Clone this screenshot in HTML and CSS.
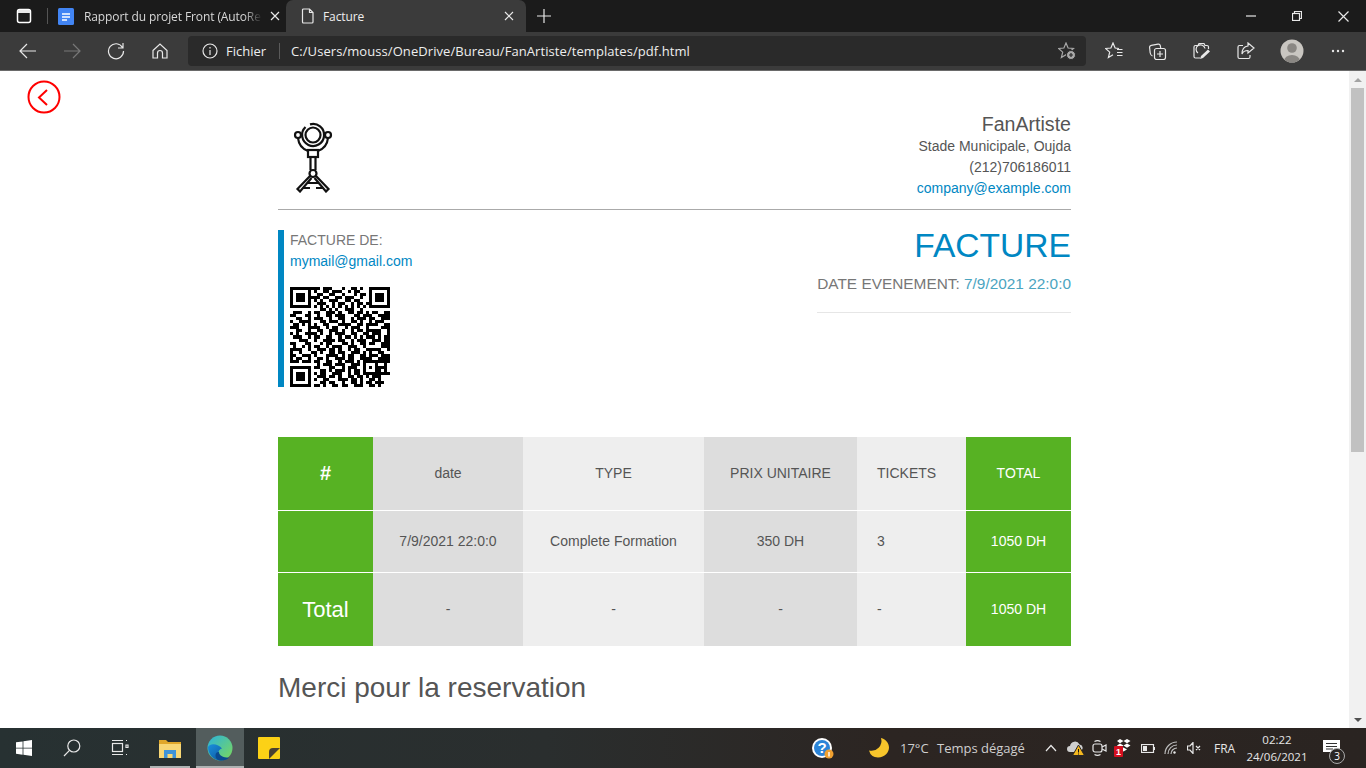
FILE: index.html
```html
<!DOCTYPE html>
<html lang="fr">
<head>
<meta charset="utf-8">
<title>Facture</title>
<link rel="stylesheet" href="styles.css">
</head>
<body>
<div class="window">
  <header class="tabbar">
    <span class="cell sidebtn"><svg class="ic bright" width="16" height="16" viewBox="0 0 16 16"><rect x="1.500" y="1.500" width="13" height="13" rx="2"/><path class="solidw" d="M2 2h12v3H2z"/></svg></span>
    <span class="tabsep"></span>
    <div class="tab">
      <svg class="favicon" width="16" height="17" viewBox="0 0 16 17"><rect width="16" height="17" rx="1.500" fill="#4285f4"/><path d="M4 6h8M4 9h8M4 12h5" stroke="#fff" stroke-width="1.500" fill="none"/></svg>
      <span class="tabtitle fade">Rapport du projet Front (AutoRe</span>
      <svg class="ic closex" width="10" height="10" viewBox="0 0 10 10"><path d="M1 1l8 8M9 1l-8 8"/></svg>
    </div>
    <div class="tab active">
      <svg class="ic" width="14" height="16" viewBox="0 0 14 16"><path d="M2.500 1h6l3.500 3.500V14a1 1 0 0 1-1 1h-8.500a1 1 0 0 1-1-1V2a1 1 0 0 1 1-1zM8.500 1v3.500H12"/></svg>
      <span class="tabtitle">Facture</span>
      <svg class="ic closex" width="10" height="10" viewBox="0 0 10 10"><path d="M1 1l8 8M9 1l-8 8"/></svg>
    </div>
    <span class="cell newtab"><svg class="ic" width="14" height="14" viewBox="0 0 14 14"><path d="M7 0v14M0 7h14"/></svg></span>
    <div class="winctl">
      <span class="wc"><svg class="ic" width="10" height="2" viewBox="0 0 10 2"><path d="M0 1h10"/></svg></span>
      <span class="wc"><svg class="ic" width="10" height="10" viewBox="0 0 10 10"><rect x=".5" y="2.500" width="7" height="7"/><path d="M2.500 2.500V.5h7v7h-2"/></svg></span>
      <span class="wc"><svg class="ic" width="11" height="11" viewBox="0 0 11 11"><path d="M.5.5l10 10M10.500.5l-10 10"/></svg></span>
    </div>
  </header>

  <nav class="toolbar">
    <span class="tb"><svg class="ic" width="18" height="16" viewBox="0 0 18 16"><path d="M1 8h16M8 1L1 8l7 7"/></svg></span>
    <span class="tb dim"><svg class="ic" width="18" height="16" viewBox="0 0 18 16"><path d="M1 8h16M10 1l7 7-7 7"/></svg></span>
    <span class="tb"><svg class="ic" width="18" height="18" viewBox="0 0 18 18"><path d="M15.500 5.500A7.500 7.500 0 1 0 16.500 9M16 1v5h-5"/></svg></span>
    <span class="tb"><svg class="ic" width="18" height="18" viewBox="0 0 18 18"><path d="M2 8.500L9 2l7 6.500V16h-4.500v-5a2.500 2.500 0 0 0-5 0v5H2z"/></svg></span>
    <div class="address">
      <svg class="ic infoic" width="16" height="16" viewBox="0 0 16 16"><circle cx="8" cy="8" r="7"/><path d="M8 7v5M8 4v1.500"/></svg>
      <span class="fichier">Fichier</span>
      <span class="addrsep"></span>
      <span class="url">C:/Users/mouss/OneDrive/Bureau/FanArtiste/templates/pdf.html</span>
      <svg class="ic staradd" width="18" height="18" viewBox="0 0 18 18"><path d="M8 1l2.100 5 5.400.5-4.200 3.600 1.300 5.400L8 12.700l-4.600 2.800 1.300-5.400L.5 6.500 5.900 6z"/><circle class="solid" cx="13" cy="13" r="4.500"/><path class="plus" d="M13 11v4M11 13h4"/></svg>
    </div>
    <div class="tools">
      <span class="tb2"><svg class="ic" width="18" height="18" viewBox="0 0 18 18"><path d="M14 6.500l-3.900-.5L8 1 5.900 6l-5.400.5 4.200 3.600-1.300 5.400L8 12.700M12 7.500h5.500M12 10.500h5.500M12 13.500h5.500"/></svg></span>
      <span class="tb2"><svg class="ic" width="18" height="18" viewBox="0 0 18 18"><path d="M3.500 14C2 13.500 1.500 12.500 1.200 11L.6 5.500A2 2 0 0 1 2.300 3.300L9 2.200a2 2 0 0 1 2.300 1.500L11.700 6"/><rect x="5.500" y="6.500" width="11" height="11" rx="2"/><path d="M11 9v6M8 12h6"/></svg></span>
      <span class="tb2"><svg class="ic" width="18" height="18" viewBox="0 0 18 18"><path d="M7 16H2.500A1.500 1.500 0 0 1 1 14.500V5a1.500 1.500 0 0 1 1.500-1.500H5L6 1.500h5L12 3.500h2A1.500 1.500 0 0 1 15.500 5v2M5 11a4.500 4.500 0 1 1 7-4.500"/><path class="penfill" d="M8 14l7-6.500 2 2L10 16l-3 1z"/></svg></span>
      <span class="tb2"><svg class="ic" width="18" height="18" viewBox="0 0 18 18"><path d="M6 3.500H2.500A1.500 1.500 0 0 0 1 5v10a1.500 1.500 0 0 0 1.500 1.500h9A1.500 1.500 0 0 0 13 15v-2"/><path d="M11 1l6 5-6 5V8.500C8 8.500 6 9.500 5 12c0-4 2-7.500 6-8z"/></svg></span>
      <span class="avatar"><svg width="24" height="24" viewBox="0 0 24 24"><defs><clipPath id="avclip"><circle cx="12" cy="12" r="11.500"/></clipPath></defs><circle cx="12" cy="12" r="11.500" fill="#c9c6c1"/><g clip-path="url(#avclip)" fill="#8a8783"><circle cx="12" cy="9" r="4.800"/><ellipse cx="12" cy="22" rx="8" ry="6"/></g></svg></span>
      <span class="tb2 dots"><svg width="14" height="4" viewBox="0 0 14 4" fill="#e6e6e6"><circle cx="2" cy="2" r="1.200"/><circle cx="7" cy="2" r="1.200"/><circle cx="12" cy="2" r="1.200"/></svg></span>
    </div>
  </nav>

  <div class="viewport">
    <main class="page">
      <a class="back"><svg width="34" height="34" viewBox="0 0 34 34" fill="none" stroke="#f00" stroke-width="2"><circle cx="17" cy="17" r="15.500"/><path d="M20 10l-8 7.500 8 7.500"/></svg></a>
      <div class="invoice">
        <section class="head">
          <svg class="logo" width="40" height="72" viewBox="0 0 40 72" fill="none" stroke="#111" stroke-width="2.200">
            <path d="M17 3.400A11 11 0 1 1 12.500 6"/><circle cx="20" cy="14" r="7.500"/>
            <circle cx="5" cy="14" r="3"/><circle cx="35" cy="14" r="3"/>
            <path d="M5 17a15.500 15.500 0 0 0 10 13M35 17a15.500 15.500 0 0 1-10 13"/>
            <rect x="15" y="29" width="10" height="7"/>
            <path d="M17.500 36v13M22.500 36v13"/>
            <circle cx="20" cy="52.500" r="3.500"/>
            <path d="M17 55L4.500 68l2.500 2.500L18.500 57M23 55l12.500 13-2.500 2.500L21.500 57M11 67h6M23 67h6M15 62h10"/>
          </svg>
          <div class="company">
            <div class="name">FanArtiste</div>
            <div>Stade Municipale, Oujda</div>
            <div>(212)706186011</div>
            <div class="link">company@example.com</div>
          </div>
        </section>

        <section class="details">
          <div class="client">
            <div class="to">FACTURE DE:</div>
            <div class="link">mymail@gmail.com</div>
            <svg class="qr" width="100" height="100" viewBox="0 0 33 33" shape-rendering="crispEdges">
              <path fill="#000" fill-rule="evenodd" d="M0 0h7v7H0zM1 1v5h5V1zM2 2h3v3H2zM26 0h7v7h-7zM27 1v5h5V1zM28 2h3v3h-3zM0 26h7v7H0zM1 27v5h5v-5zM2 28h3v3H2zM24 24h5v5h-5zM25 25v3h3v-3zM26 26h1v1h-1z"/>
              <path fill="none" stroke="#000" d="M7 .5h3m1 0h3m3 0h1m2 0h2m1 0h1M8 1.500h1m2 0h2m1 0h3m2 0h1m1 0h2M9 2.500h2m2 0h2m2 0h1m3 0h1m1 0h2M7 3.500h3m1 0h2m2 0h2m1 0h3m2 0h1M8 4.500h1m1 0h1m2 0h3m2 0h2m1 0h2M9 5.500h3m2 0h1m1 0h2m2 0h1m1 0h2m1 0h1M8 6.500h1m1 0h1m1 0h1m1 0h1m1 0h1m1 0h1m1 0h1m1 0h1m1 0h1M10 7.500h2m1 0h1m1 0h1m2 0h3m2 0h1M1 8.500h3m2 0h1m1 0h2m2 0h3m1 0h1m2 0h2m1 0h2m1 0h1m1 0h2M0 9.500h2m3 0h2m2 0h1m2 0h2m1 0h3m3 0h2m1 0h3M2 10.500h2m2 0h1m1 0h3m2 0h1m2 0h2m2 0h1m1 0h3m1 0h2M0 11.500h1m2 0h4m3 0h2m1 0h3m1 0h1m2 0h2m1 0h1m2 0h1M1 12.500h2m1 0h1m1 0h1m1 0h1m2 0h2m3 0h4m2 0h2m1 0h3M0 13.500h3m3 0h4m2 0h1m1 0h2m2 0h1m1 0h3m2 0h1M2 14.500h2m2 0h1m2 0h2m2 0h3m1 0h1m2 0h1m1 0h2m1 0h3M0 15.500h1m1 0h1m2 0h4m1 0h1m2 0h1m1 0h3m2 0h2m2 0h2M1 16.500h3m2 0h1m1 0h2m2 0h2m2 0h1m1 0h2m1 0h1m1 0h1m1 0h3M3 17.500h3m2 0h1m2 0h4m1 0h2m2 0h1m1 0h3m2 0h1M0 18.500h2m3 0h2m3 0h1m1 0h2m3 0h2m1 0h1m2 0h2m1 0h2M1 19.500h1m2 0h1m1 0h1m1 0h2m2 0h1m1 0h3m2 0h3m2 0h1M0 20.500h4m2 0h1m2 0h3m1 0h2m1 0h1m2 0h1m1 0h2m2 0h3M0 21.500h1m2 0h1m3 0h2m1 0h1m2 0h2m1 0h2m2 0h3m1 0h1m1 0h1M0 22.500h2m2 0h3m1 0h1m3 0h4m1 0h1m1 0h2m2 0h2m1 0h2M0 23.500h1m1 0h2m2 0h1m2 0h2m1 0h1m2 0h3m1 0h2m2 0h4M8 24.500h2m2 0h2m2 0h1m1 0h3m1 0h1m6 0h2M0 24.500h3m1 0h3M9 25.500h1m1 0h3m1 0h3m2 0h3m5 0h1m2 0h1M8 26.500h2m3 0h2m2 0h1m1 0h3m6 0h1m1 0h1M10 27.500h2m1 0h1m1 0h3m1 0h1m1 0h2m5 0h2m1 0h1M8 28.500h1m1 0h2m2 0h3m2 0h1m1 0h2m6 0h2M9 29.500h3m1 0h2m1 0h1m2 0h2m1 0h2m1 0h1m1 0h3M8 30.500h1m2 0h2m3 0h3m1 0h2m1 0h1m2 0h2m1 0h1M10 31.500h2m1 0h2m2 0h1m2 0h2m1 0h1m1 0h2m1 0h3M8 32.500h2m1 0h1m2 0h2m1 0h2m2 0h3m2 0h2m1 0h1M27 8.500h2m2 0h2M29 9.500h4M27 10.500h1m2 0h3M28 11.500h3M27 12.500h2m2 0h2M30 13.500h3M28 14.500h2m2 0h1M27 15.500h3m2 0h1M29 16.500h1m1 0h2M28 17.500h2m1 0h2M27 18.500h1m2 0h3M30 19.500h3M27 20.500h3m2 0h1M29 21.500h2M28 22.500h1m1 0h3M29 23.500h4M30 24.500h3M29 26.500h3M30 28.500h3"/>
            </svg>
          </div>
          <div class="meta">
            <h1>FACTURE</h1>
            <div class="date">DATE EVENEMENT: <span class="dateval">7/9/2021 22:0:0</span></div>
          </div>
        </section>

        <table class="items">
          <colgroup><col class="c1"><col class="c2"><col class="c3"><col class="c4"><col class="c5"><col class="c6"></colgroup>
          <tr class="r1">
            <td class="green hash">#</td><td class="dark">date</td><td class="light">TYPE</td><td class="dark">PRIX UNITAIRE</td><td class="light lft">TICKETS</td><td class="green">TOTAL</td>
          </tr>
          <tr class="r2">
            <td class="green"></td><td class="dark">7/9/2021 22:0:0</td><td class="light">Complete Formation</td><td class="dark">350 DH</td><td class="light lft">3</td><td class="green">1050 DH</td>
          </tr>
          <tr class="r3">
            <td class="green big">Total</td><td class="dark">-</td><td class="light">-</td><td class="dark">-</td><td class="light lft">-</td><td class="green">1050 DH</td>
          </tr>
        </table>
        <h2 class="thanks">Merci pour la reservation</h2>
      </div>
    </main>
    <aside class="scrollbar">
      <span class="arrow up"></span>
      <span class="track"><span class="thumb"></span></span>
      <span class="arrow down"></span>
    </aside>
  </div>

  <footer class="taskbar">
    <span class="tk"><svg width="16" height="16" viewBox="0 0 16 16" fill="#fff"><path d="M0 2.300l6.600-.9v6.300H0zM7.400 1.300L16 0v7.700H7.400zM0 8.400h6.600v6.300L0 13.800zM7.400 8.400H16V16l-8.600-1.200z"/></svg></span>
    <span class="tk"><svg class="ic" width="18" height="18" viewBox="0 0 18 18"><circle cx="10.800" cy="7" r="6"/><path d="M6.500 11.300L1 17"/></svg></span>
    <span class="tk"><svg class="ic" width="18" height="16" viewBox="0 0 18 16"><rect x="1.500" y="3.500" width="10" height="8"/><path d="M1 .5h11M1 14.500h11M15 .5h1M15 14.500h1M15 5h2v2.500h-2z"/></svg></span>
    <span class="tk running gapl"><svg width="22" height="20" viewBox="0 0 22 20"><path d="M0 2h7l2 2h13v4H0z" fill="#e0a72a"/><rect y="6" width="22" height="14" fill="#f8d775"/><path d="M5 12h12v8h-3.500v-4h-5v4H5z" fill="#3f93d8"/></svg></span>
    <span class="tk current"><svg width="26" height="26" viewBox="0 0 26 26"><defs><linearGradient id="eg" x1="0" y1="0" x2="1" y2="1"><stop offset="0" stop-color="#2bb3dc"/><stop offset="1" stop-color="#7ed957"/></linearGradient><linearGradient id="eb" x1="0" y1="0" x2="1" y2="1"><stop offset="0" stop-color="#1a8fdc"/><stop offset="1" stop-color="#0c4f97"/></linearGradient></defs><circle cx="13" cy="13" r="12.500" fill="url(#eg)"/><path d="M1 12C1 19 6 25.500 14 25.500c3.500 0 6-1 8-3-4 1.500-10.500 0-10.500-5 0-2 1.500-3.500 3.500-4C12 9 3 7.500 1 12z" fill="url(#eb)"/><path d="M12 17c0 3.500 3.800 5.300 9.700 5.800-1.600 1.700-4.500 2.700-7.700 2.700-3 0-5.500-2-5.500-5 0-2.500 1.500-3.500 3.500-3.500z" fill="#0b4a8f"/></svg></span>
    <span class="tk"><svg width="22" height="22" viewBox="0 0 22 22"><rect width="22" height="22" rx="1" fill="#fcd116"/><path d="M11 22v-7a4 4 0 0 1 4-4h7L11 22z" fill="#4a4131"/></svg></span>

    <div class="tray">
      <span class="tc w24"><svg width="24" height="22" viewBox="0 0 24 22"><circle cx="11" cy="11" r="10" fill="#fff"/><circle cx="11" cy="11" r="8" fill="#2b84d8"/><text class="qmark" x="11" y="16" text-anchor="middle">?</text><circle cx="18" cy="17" r="4.500" fill="#f0a030"/><rect x="17.300" y="15" width="1.400" height="4.500" fill="#fff"/></svg></span>
      <span class="tc w24 mlmoon"><svg width="20" height="20" viewBox="0 0 20 20"><path d="M12 0a10 10 0 0 1-12 12.500A9.500 9.500 0 0 0 9 19.500C16 19.500 20 14 20 9.500 20 5 16.500 1 12 0z" fill="#f7c52b"/></svg></span>
      <span class="temp">17°C</span>
      <span class="weather">Temps dégagé</span>
      <span class="tc w25 mlchev"><svg class="ic" width="12" height="8" viewBox="0 0 12 8"><path d="M1 7l5-5.500L11 7"/></svg></span>
      <span class="tc w25"><svg width="18" height="16" viewBox="0 0 18 16"><path d="M3 12a3 3 0 0 1 0-6 5 5 0 0 1 9.500-1.500A3.500 3.500 0 0 1 14 11v1z" fill="#cfcfcf"/><path d="M11.500 5l6 10.500H5.500z" fill="#f5b81f" stroke="#2a2624"/><path d="M11.500 9v3.500M11.500 13.500v1" stroke="#111"/></svg></span>
      <span class="tc w23"><svg class="ic" width="16" height="18" viewBox="0 0 16 18"><rect x="1" y="5" width="9" height="8" rx="2"/><path d="M10 8l4-2v6l-4-2M2.500 2.500a6 6 0 0 1 6 0M2.500 15.500a6 6 0 0 0 6 0"/></svg></span>
      <span class="tc w24"><svg width="18" height="18" viewBox="0 0 18 18"><path d="M3 0l3.500 2L3 4.200 0 2zM10 0l3.500 2L10 4.200 6.500 2zM3 4.500L6.500 6.500 3 8.700 0 6.500zM10 4.500l3.500 2-3.500 2.200-3.500-2.200zM6.500 8.500L10 10.500 6.500 12.500 3 10.500z" fill="#fff" transform="translate(3 0)"/><rect y="7" width="9" height="11" rx="1" fill="#d40f1f"/><text class="badge1" x="4.500" y="16" text-anchor="middle">1</text></svg></span>
      <span class="tc w25"><svg class="ic" width="14" height="9" viewBox="0 0 14 9"><rect x=".5" y=".5" width="12" height="8"/><path d="M13.500 3v3"/><rect class="solidw" x="2" y="2" width="4" height="5"/></svg></span>
      <span class="tc w23"><svg class="ic thin" width="16" height="14" viewBox="0 0 16 14"><path d="M1 13A12 12 0 0 1 13 1M4 13a9 9 0 0 1 9-9M7 13a6 6 0 0 1 6-6"/><circle class="solidw" cx="10.500" cy="11.500" r="1.200"/></svg></span>
      <span class="tc w22"><svg class="ic" width="14" height="12" viewBox="0 0 14 12"><path d="M.5 4v4H3l3 3.500V.5L3 4zM9 4l4 4M13 4L9 8"/></svg></span>
      <span class="lang">FRA</span>
      <span class="clock"><span>02:22</span><span>24/06/2021</span></span>
      <span class="notif"><svg width="18" height="16" viewBox="0 0 18 16"><path d="M0 0h17v12h-6l-3 3v-3H0z" fill="#fff"/><path d="M3 3.500h11M3 6.500h11M3 9h7" stroke="#333" fill="none"/></svg><span class="notifcount">3</span></span>
    </div>
  </footer>
</div>
</body>
</html>
```
FILE: styles.css
```css
* { box-sizing: border-box; }
html, body { margin: 0; height: 100%; overflow: hidden; }
body { font-family: "Liberation Sans", Arial, sans-serif; font-size: 14px; color: #555; }
.window { width: 1366px; height: 768px; display: flex; flex-direction: column; overflow: hidden; }

.ic { fill: none; stroke: #e8e8e8; stroke-width: 1.2; display: block; }
.ic.bright { stroke: #fff; stroke-width: 1.500; }
.ic .solid { fill: #a8a8a8; stroke: #2a2a2a; stroke-width: 1; }
.ic .plus { stroke: #2a2a2a; }
.ic .penfill { fill: #e8e8e8; stroke: none; }
.ic .solidw { fill: #e8e8e8; stroke: none; }
.ic.thin { stroke: #bdbdbd; }

.tabbar { height: 32px; background: #1b1b1b; display: flex; align-items: stretch; font-family: "Open Sans", sans-serif; font-size: 12px; color: #e2e2e2; flex: none; }
.cell { display: flex; align-items: center; justify-content: center; }
.sidebtn { width: 47px; }
.tabsep { width: 1px; height: 16px; margin-top: 8px; background: #555; }
.tab { width: 238px; display: flex; align-items: center; padding-left: 10px; }
.tab .tabtitle { margin-left: 10px; flex: 1; overflow: hidden; white-space: nowrap; color: #d8d8d8; letter-spacing: -.1px; }
.tab .fade { -webkit-mask-image: linear-gradient(to right, #000 90%, transparent); mask-image: linear-gradient(to right, #000 90%, transparent); }
.tab .closex { margin: 0 6px 0 8px; }
.tab.active { background: #3b3b3b; border-radius: 7px 7px 0 0; width: 240px; padding-left: 15px; }
.tab.active .tabtitle { margin-left: 8px; color: #eee; }
.tab.active .closex { margin-right: 12px; }
.newtab { width: 36px; }
.winctl { margin-left: auto; display: flex; }
.wc { width: 46px; display: flex; align-items: center; justify-content: center; }

.toolbar { height: 39px; flex: none; background: #3b3b3b; border-bottom: 1px solid #6a6a6a; display: flex; align-items: center; padding-left: 6px; font-family: "Open Sans", sans-serif; color: #eee; }
.tb { width: 44px; height: 30px; display: flex; align-items: center; justify-content: center; }
.tb.dim { opacity: .35; }
.address { width: 898px; height: 30px; margin-left: 6px; background: #2a2a2a; border-radius: 4px; display: flex; align-items: center; padding-left: 14px; font-size: 13px; }
.fichier { margin-left: 8px; width: 41px; }
.addrsep { width: 1px; height: 16px; background: #5a5a5a; margin: 0 11px 0 12px; }
.url { white-space: nowrap; flex: 1; letter-spacing: .07px; }
.staradd { stroke: #a8a8a8; margin-right: 10px; }
.tools { display: flex; align-items: center; margin-left: 6px; }
.tb2 { width: 44px; height: 30px; display: flex; align-items: center; justify-content: center; }
.avatar { width: 48px; display: flex; justify-content: center; }

.viewport { flex: 1; display: flex; min-height: 0; background: #fff; }
.page { flex: 1; position: relative; overflow: hidden; }
.back { position: absolute; left: 27px; top: 9px; display: block; width: 34px; height: 34px; }
.invoice { width: 793px; margin: 0 auto; padding-top: 41px; }
.head { display: flex; justify-content: space-between; border-bottom: 1px solid #aaa; height: 98px; }
.logo { margin: 9px 0 0 14.500px; display: block; }
.company { text-align: right; line-height: 21px; }
.company .name { font-size: 19.600px; line-height: 24px; }
.link { color: #0087c3; }

.details { display: flex; justify-content: space-between; margin-top: 20px; height: 207px; align-items: flex-start; }
.client { border-left: 6px solid #0087c3; padding-left: 6px; line-height: 21px; height: 157px; }
.to { color: #777; }
.qr { display: block; margin-top: 15px; }
.meta { text-align: right; border-bottom: 1px solid #e6e6e6; height: 83px; }
h1 { margin: 0; color: #0087c3; font-size: 33.600px; font-weight: 400; line-height: 31px; }
.date { font-size: 15.400px; margin-top: 13px; color: #777; line-height: 20px; }
.dateval { color: #4ba4bf; }

.items { width: 793px; border-collapse: separate; border-spacing: 0; table-layout: fixed; text-align: center; }
.c1 { width: 95px; } .c2 { width: 150px; } .c3 { width: 181px; } .c4 { width: 153px; } .c5 { width: 109px; } .c6 { width: 105px; }
.items td { padding: 0 0 2px; }
.items td.hash, .items td.big { padding-bottom: 0; }
.r1 td, .r2 td { border-bottom: 1px solid #fff; }
.r1 { height: 74px; } .r2 { height: 62px; } .r3 { height: 73px; }
.green { background: #57b223; color: #fff; }
.dark { background: #ddd; }
.light { background: #eee; }
.items .lft { text-align: left; padding-left: 20px; }
.hash { font-size: 20px; font-weight: 700; }
.big { font-size: 22px; }
.thanks { margin: 25px 0 0; font-size: 28px; font-weight: 400; color: #555; line-height: 34px; }

.scrollbar { width: 17px; flex: none; background: #f1f1f1; display: flex; flex-direction: column; align-items: center; }
.arrow { height: 17px; width: 17px; display: flex; align-items: center; justify-content: center; flex: none; }
.arrow::before { content: ""; width: 0; height: 0; border-left: 4px solid transparent; border-right: 4px solid transparent; }
.up::before { border-bottom: 4px solid #a3a3a3; }
.down::before { border-top: 4px solid #505050; }
.track { flex: 1; width: 100%; padding: 0 2px; }
.thumb { display: block; height: 364px; background: #c1c1c1; }

.taskbar { height: 40px; flex: none; background: linear-gradient(to right, #273132 0, #2a2e2e 40%, #2c2522 65%, #2a2421 100%); display: flex; align-items: center; color: #e6e6e6; font-family: "Open Sans", sans-serif; font-size: 12px; }
.tk { width: 48px; height: 40px; display: flex; align-items: center; justify-content: center; position: relative; }
.gapl { margin: 0 2px; }
.current { background: #535d5d; margin-right: 1px; }
.running::after, .current::after { content: ""; position: absolute; left: 4px; right: 4px; bottom: 0; height: 2px; background: #aeb3b3; }
.current::after { left: 0; right: 0; }
.tray { margin-left: auto; display: flex; align-items: center; height: 40px; }
.tc { display: flex; align-items: center; justify-content: center; height: 40px; }
.w22 { width: 22px; } .w23 { width: 23px; } .w24 { width: 24px; } .w25 { width: 25px; }
.mlmoon { margin-left: 32px; }
.temp { margin-left: 9px; width: 37px; font-size: 13px; color: #cfcfcf; }
.weather { width: 88px; font-size: 13px; color: #cfcfcf; white-space: nowrap; }
.mlchev { margin-left: 13px; }
.lang { margin-left: 9px; width: 31px; font-size: 12px; }
.clock { width: 64px; display: flex; flex-direction: column; align-items: center; line-height: 17px; font-size: 11.500px; }
.notif { width: 57px; display: flex; align-items: center; justify-content: center; position: relative; padding-right: 11px; }
.notifcount { position: absolute; left: 20px; top: 8px; width: 16px; height: 16px; border-radius: 50%; background: #2a2624; border: 1px solid #aaa; font-size: 10px; line-height: 14px; text-align: center; color: #fff; }
.qmark { font: 700 15px "Liberation Sans", sans-serif; fill: #fff; }
.badge1 { font: 700 9px "Liberation Sans", sans-serif; fill: #fff; }
```
